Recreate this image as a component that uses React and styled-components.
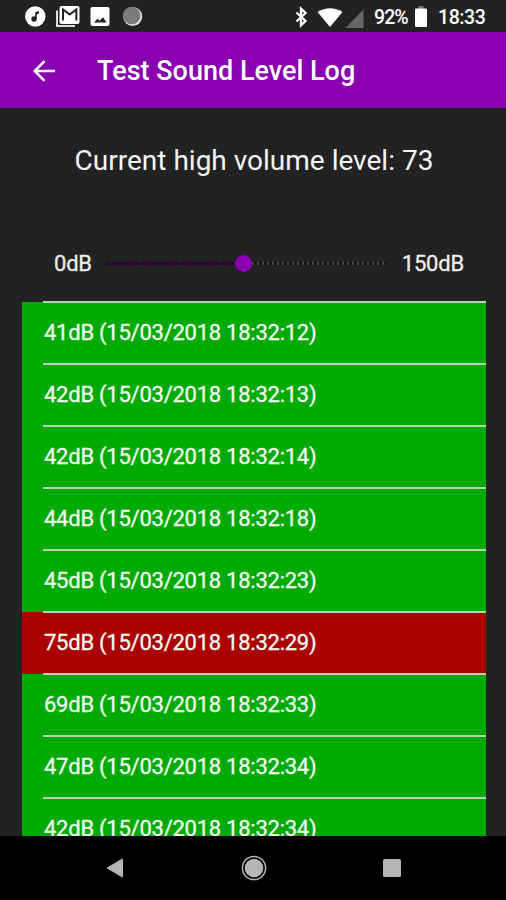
import React from "react";
import styled, { createGlobalStyle } from "styled-components";

const logs = [
  { level: 41, time: "15/03/2018 18:32:12" },
  { level: 42, time: "15/03/2018 18:32:13" },
  { level: 42, time: "15/03/2018 18:32:14" },
  { level: 44, time: "15/03/2018 18:32:18" },
  { level: 45, time: "15/03/2018 18:32:23" },
  { level: 75, time: "15/03/2018 18:32:29" },
  { level: 69, time: "15/03/2018 18:32:33" },
  { level: 47, time: "15/03/2018 18:32:34" },
  { level: 42, time: "15/03/2018 18:32:34" },
];

const HIGH_LEVEL = 73;
const MAX_LEVEL = 150;

function StatusBar() {
  return (
    <Status>
      <svg width="120" height="24" viewBox="0 0 120 24">
        {/* music */}
        <circle cx="11.3" cy="12.5" r="10.2" fill="#fff" />
        <circle cx="10" cy="15" r="2.7" fill="#222" />
        <path d="M11.200 15V8.300l3.800-1.300v2.500l-2.200.8V15z" fill="#222" />
        {/* mail */}
        <path d="M33 6.500V22H51" fill="none" stroke="#ddd" strokeWidth="2" />
        <rect x="35.500" y="2" width="20" height="18" rx="2" fill="#fff" />
        <path d="M39 16.500V5.500l6.700 5 6.600-5v11" fill="none" stroke="#222" strokeWidth="2" />
        {/* picture */}
        <rect x="66.500" y="3" width="19" height="19" rx="2" fill="#fff" />
        <path d="M70 18.500l3.300-3.800 2.400 2 3.300-3.500 3.600 5.300z" fill="#222" />
        {/* sync */}
        <circle cx="108.700" cy="12.500" r="9.500" fill="#ddd" />
        <circle cx="107.600" cy="11.500" r="8.700" fill="#7b7b7b" />
      </svg>
      <StatusRight>
        <svg width="70" height="24" viewBox="0 0 70 24">
          <path
            d="M1.500 7.500l9 8.500-4.500 4.300V3.700l4.500 4.300-9 8.500"
            fill="none"
            stroke="#fff"
            strokeWidth="2.300"
          />
          <path d="M22.500 7Q35 -.5 47.500 7L35 22z" fill="#fff" />
          <path d="M50.500 23L68.500 4.500V23z" fill="#666" />
        </svg>
        <Battery>92%</Battery>
        <svg width="12" height="22" viewBox="0 0 12 22">
          <path d="M3.500 0h5v3h-5z" fill="#777" />
          <rect y="2.500" width="12" height="18.500" rx="1" fill="#fff" />
        </svg>
        <Clock>18:33</Clock>
      </StatusRight>
    </Status>
  );
}

function App() {
  return (
    <Screen>
      <GlobalStyle />
      <StatusBar />
      <Header>
        <svg width="22" height="22" viewBox="0 0 22 22">
          <path d="M22 11H2M11.500 1.200L1.700 11l9.800 9.800" fill="none" stroke="#fff" strokeWidth="2.500" />
        </svg>
        <Title>Test Sound Level Log</Title>
      </Header>
      <Current>Current high volume level: {HIGH_LEVEL}</Current>
      <SliderRow>
        <Limit>0dB</Limit>
        <Track>
          <Filled style={{ width: `${(HIGH_LEVEL / MAX_LEVEL) * 100}%` }} />
          <Thumb />
          <Rest />
        </Track>
        <Limit>{MAX_LEVEL}dB</Limit>
      </SliderRow>
      <List>
        {logs.map((log, index) => (
          <Row key={index} $high={log.level > HIGH_LEVEL}>
            <RowText>
              {log.level}dB ({log.time})
            </RowText>
          </Row>
        ))}
      </List>
      <NavBar>
        <svg width="18" height="20" viewBox="0 0 18 20">
          <path d="M1 10L16.500 1v18z" fill="#b5b5b5" stroke="#b5b5b5" strokeLinejoin="round" />
        </svg>
        <svg width="26" height="26" viewBox="0 0 26 26">
          <circle cx="13" cy="13" r="11.600" fill="none" stroke="#b5b5b5" strokeWidth="1.500" />
          <circle cx="13" cy="13" r="9.300" fill="#b5b5b5" />
        </svg>
        <svg width="18" height="18" viewBox="0 0 18 18">
          <rect width="18" height="18" rx="1.500" fill="#b5b5b5" />
        </svg>
      </NavBar>
    </Screen>
  );
}

const GlobalStyle = createGlobalStyle`
  * {
    box-sizing: border-box;
  }

  body {
    margin: 0;
    background-color: #222;
    font-family: Roboto, "Liberation Sans", sans-serif;
  }

  svg {
    display: block;
    flex-shrink: 0;
  }
`;

const Screen = styled.div`
  display: flex;
  flex-direction: column;
  width: 506px;
  height: 900px;
  overflow: hidden;
  color: #fff;
  background-color: #222;
`;

const Status = styled.div`
  display: flex;
  justify-content: space-between;
  flex-shrink: 0;
  height: 32px;
  padding: 4px 21px 0 24px;
`;

const StatusRight = styled.div`
  display: flex;
  height: 26px;
  align-items: center;
  font-size: 20px;
  font-weight: 500;
  white-space: nowrap;
`;

const Battery = styled.span`
  width: 41px;
  margin-left: 9px;
  font-size: 19.5px;
  letter-spacing: -0.9px;
`;

const Clock = styled.span`
  width: 47px;
  margin-left: 11px;
  font-size: 19.5px;
  letter-spacing: -0.4px;
`;

const Header = styled.header`
  display: flex;
  align-items: center;
  flex-shrink: 0;
  height: 76px;
  padding: 1px 0 0 33px;
  background-color: #8800b0;
`;

const Title = styled.h1`
  margin: 1px 0 0 42px;
  font-size: 27px;
  font-weight: 500;
  white-space: nowrap;
`;

const Current = styled.p`
  margin: 35px 0 0;
  height: 36px;
  line-height: 36px;
  padding-left: 2px;
  font-size: 28px;
  text-align: center;
  white-space: nowrap;
  color: #f5f5f5;
`;

const SliderRow = styled.div`
  display: flex;
  align-items: center;
  height: 30px;
  margin: 69px 42px 0 54px;
`;

const Limit = styled.span`
  font-size: 22px;
  letter-spacing: -0.2px;
  color: #eee;
  -webkit-text-stroke: 0.3px #eee;

  &:first-child {
    width: 52px;
  }

  &:last-child {
    margin-left: 15px;
  }
`;

const Track = styled.div`
  display: flex;
  align-items: center;
  width: 281px;
`;

const Filled = styled.div`
  height: 3px;
  background: repeating-linear-gradient(90deg, #25062e 0 3px, #3c0748 3px 5px);
`;

const Thumb = styled.div`
  flex-shrink: 0;
  width: 17px;
  height: 17px;
  margin: 0 -8px;
  border-radius: 50%;
  background-color: #8800b0;
  z-index: 1;
`;

const Rest = styled.div`
  flex: 1;
  height: 3px;
  background: repeating-linear-gradient(90deg, #161616 0 3px, #444 3px 5px);
`;

const List = styled.div`
  flex: 1;
  min-height: 0;
  margin: 23px 20px 0 22px;
  padding-top: 1px;
  overflow: hidden;
`;

const Row = styled.div`
  display: flex;
  height: 62px;
  padding-left: 21px;
  background: ${({ $high }) => ($high ? "#aa0000" : "#00aa00")};
`;

// the divider sits half over the row above
const RowText = styled.div`
  flex: 1;
  margin-top: -1px;
  padding-left: 1px;
  border-top: 2px solid ${"#b8d0b8"};
  font-size: 22px;
  line-height: 60px;
  letter-spacing: -0.25px;
  white-space: nowrap;
  color: #f4fbf4;
  -webkit-text-stroke: 0.3px #f4fbf4;
`;

const NavBar = styled.nav`
  display: flex;
  align-items: center;
  justify-content: space-between;
  flex-shrink: 0;
  height: 64px;
  padding: 0 105px 0 106px;
  background-color: #000;
`;

export default App;
